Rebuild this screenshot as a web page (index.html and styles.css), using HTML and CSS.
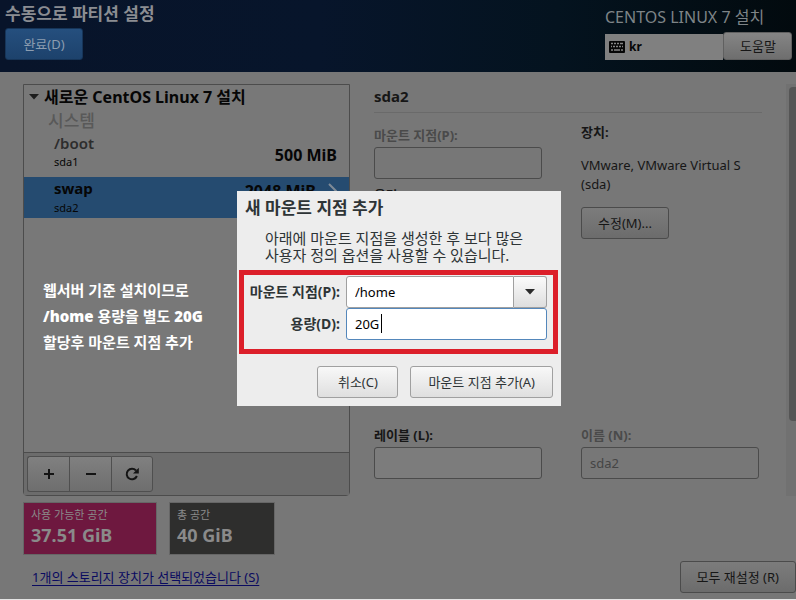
FILE: index.html
```html
<!DOCTYPE html>
<html lang="ko">
<head>
<meta charset="utf-8">
<meta name="viewport" content="width=device-width, initial-scale=1">
<title>수동으로 파티션 설정</title>
<link rel="stylesheet" href="styles.css">
</head>
<body>
<header class="topbar">
  <div class="topbar-left">
    <h1>수동으로 파티션 설정</h1>
    <button class="btn btn-done" type="button">완료(D)</button>
  </div>
  <div class="topbar-right">
    <p class="product">CENTOS LINUX 7 설치</p>
    <div class="topbar-tools">
      <div class="keyboard">
        <svg width="16" height="12" viewBox="0 0 16 12" aria-hidden="true">
          <rect width="16" height="12" rx="1" fill="#060606"/>
          <path d="M2 2.5h2M5 2.5h2M8 2.5h2M11 2.5h3M2 5.5h1M4 5.5h2M7 5.5h2M10 5.5h2M13 5.5h1M2 9h2M5 9h6M12 9h2" stroke="#858585" stroke-width="1.6"/>
        </svg>
        <span>kr</span>
      </div>
      <button class="btn btn-help" type="button">도움말</button>
    </div>
  </div>
</header>

<main class="content">
  <section class="partitions">
    <div class="list">
      <h2 class="tree-title">
        <svg width="10" height="6" viewBox="0 0 10 6" aria-hidden="true"><path d="M0 0h10L5 5.500z" fill="#1c1c1c"/></svg>
        새로운 CentOS Linux 7 설치
      </h2>
      <h3 class="group">시스템</h3>
      <div class="item">
        <div><div class="mount">/boot</div><div class="device">sda1</div></div>
        <div class="size">500 MiB</div>
      </div>
      <div class="item selected">
        <div><div class="mount">swap</div><div class="device">sda2</div></div>
        <div class="size">2048 MiB
          <svg width="9" height="16" viewBox="0 0 9 16" aria-hidden="true"><path d="M1 1l7 7-7 7" fill="none" stroke="#7f8a96" stroke-width="2"/></svg>
        </div>
      </div>
      <p class="note">웹서버 기준 설치이므로<br><b>/home</b> 용량을 별도 <b>20G</b><br>할당후 마운트 지점 추가</p>
    </div>
    <div class="toolbar">
      <div class="tool-group">
        <button type="button" aria-label="추가"><svg width="12" height="12" viewBox="0 0 12 12"><path d="M6 1v10M1 6h10" stroke="#141414" stroke-width="2"/></svg></button>
        <button type="button" aria-label="제거"><svg width="12" height="12" viewBox="0 0 12 12"><path d="M1 6h10" stroke="#141414" stroke-width="2"/></svg></button>
        <button type="button" aria-label="다시 읽기"><svg width="14" height="14" viewBox="0 0 14 14"><path d="M11 3.500A5.300 5.300 0 1 0 11.900 9" fill="none" stroke="#141414" stroke-width="2"/><path d="M13.800 .8v5.800H8z" fill="#141414"/></svg></button>
      </div>
    </div>
  </section>

  <section class="details">
    <h2>sda2</h2>
    <div class="detail-grid">
      <div class="field">
        <label class="muted" for="mp">마운트 지점(P):</label>
        <input id="mp" type="text" disabled>
        <label class="capacity" for="cap">용량(D):</label>
        <input id="cap" type="text">
      </div>
      <div class="device-info">
        <h3>장치:</h3>
        <p>VMware, VMware Virtual S (sda)</p>
        <button class="btn btn-modify" type="button">수정(M)...</button>
      </div>
      <div class="field">
        <label for="lb">레이블 (L):</label>
        <input id="lb" type="text">
      </div>
      <div class="field">
        <label class="muted" for="nm">이름 (N):</label>
        <input id="nm" type="text" value="sda2" disabled>
      </div>
    </div>
  </section>
  <div class="scrollbar"><div class="thumb"></div></div>
</main>

<footer class="footer">
  <div>
    <div class="spaces">
      <div class="space available"><span>사용 가능한 공간</span><strong>37.51 GiB</strong></div>
      <div class="space total"><span>총 공간</span><strong>40 GiB</strong></div>
    </div>
    <a href="#storage">1개의 스토리지 장치가 선택되었습니다 (S)</a>
  </div>
  <button class="btn btn-reset" type="button">모두 재설정 (R)</button>
</footer>

<div class="overlay">
  <form class="dialog" role="dialog" aria-labelledby="dlg-title">
    <h2 id="dlg-title">새 마운트 지점 추가</h2>
    <p>아래에 마운트 지점을 생성한 후 보다 많은<br>사용자 정의 옵션을 사용할 수 있습니다.</p>
    <div class="form-box">
      <label for="new-mp">마운트 지점(P):</label>
      <div class="combo">
        <input id="new-mp" type="text" value="/home">
        <button type="button" aria-label="목록 열기"><svg width="10" height="6" viewBox="0 0 10 6"><path d="M0 0h10L5 5.500z" fill="#2b2b2b"/></svg></button>
      </div>
      <label for="new-cap">용량(D):</label>
      <div class="focused">
        <input id="new-cap" type="text" value="20G">
        <span class="caret"></span>
      </div>
    </div>
    <div class="actions">
      <button class="btn" type="button">취소(C)</button>
      <button class="btn" type="button">마운트 지점 추가(A)</button>
    </div>
  </form>
</div>
</body>
</html>
```
FILE: styles.css
```css
* { box-sizing: border-box; }

body {
  margin: 0;
  min-height: 100vh;
  display: flex;
  flex-direction: column;
  position: relative;
  overflow: hidden;
  background: #777;
  border-bottom: 1px solid #e4e4e4;
  color: #161616;
  font: 13px/18px "Noto Sans", "Noto Sans CJK KR", sans-serif;
}

h1, h2, h3, p { margin: 0; }
button, input { font: inherit; color: inherit; margin: 0; }
svg { display: block; flex: none; }

.btn {
  height: 32px;
  padding: 0 16px;
  border: 1px solid #4b4b4b;
  border-radius: 3px;
  background: linear-gradient(#7c7c7c, #6c6c6c);
  white-space: nowrap;
}

/* Top bar */
.topbar {
  display: flex;
  justify-content: space-between;
  height: 72px;
  padding: 2px 4px 0 5px;
  background: linear-gradient(90deg, #08142a, #07152b 40%, #04131f 70%, #020a0e);
}
.topbar h1 { font-size: 17px; line-height: 24px; color: #8b8d92; }
.btn-done {
  width: 78px;
  margin-top: 2px;
  border-color: #163559;
  background: linear-gradient(#254f7e, #1d426c);
  color: #8c9db0;
}
.topbar-right { display: flex; flex-direction: column; width: 187px; }
.product { font-size: 16px; line-height: 30px; color: #7e8487; }
.topbar-tools { display: flex; align-items: flex-end; }
.keyboard {
  flex: 1;
  display: flex;
  align-items: center;
  gap: 4px;
  height: 26px;
  padding: 0 4px;
  background: #808080;
  color: #060606;
  font-size: 12px;
  font-weight: 700;
}
.btn-help { width: 69px; height: 28px; border-color: #606060; background: linear-gradient(#858585, #6e6e6e); }

/* Main area */
.content { display: flex; padding: 12px 0 0 23px; }
.partitions {
  width: 327px;
  height: 412px;
  display: flex;
  flex-direction: column;
  border: 1px solid #4c4c4c;
  border-radius: 0 0 4px 4px;
}
.list { flex: 1; background: #787878; }
.tree-title {
  display: flex;
  align-items: center;
  gap: 5px;
  padding-left: 5px;
  font-size: 16px;
  line-height: 24px;
  color: #060606;
}
.group { padding-left: 24px; font-size: 17px; font-weight: 500; line-height: 24px; color: #595959; }
.item {
  display: flex;
  justify-content: space-between;
  align-items: center;
  padding: 0 12px 6px 30px;
  color: #060606;
}
.mount { font-size: 15px; font-weight: 600; line-height: 20px; color: #2d2d2d; }
.size { font-size: 16px; font-weight: 700; line-height: 20px; padding-bottom: 8px; margin-bottom: -14px; }
.device { font-size: 11px; line-height: 18px; }
.item.selected { padding: 0 12px 1px 30px; background: #254b70; }
.selected .mount { color: #060606; font-weight: 700; line-height: 22px; }
.selected .size { display: flex; align-items: center; gap: 12px; margin: 0; padding-bottom: 12px; }
.note {
  padding: 59px 0 0 19px;
  color: #fff;
  font-size: 15px;
  line-height: 26px;
  font-weight: 600;
}
.toolbar { height: 43px; padding: 3px; border-top: 1px solid #4c4c4c; background: #6c6c6c; }
.tool-group { display: inline-flex; }
.tool-group button {
  display: flex;
  align-items: center;
  justify-content: center;
  width: 42px;
  height: 36px;
  padding: 0;
  border: 1px solid #4f4f4f;
  border-right-width: 0;
  background: linear-gradient(#808080, #6e6e6e);
}
.tool-group button:first-child { border-radius: 3px 0 0 3px; }
.tool-group button:last-child { border-right-width: 1px; border-radius: 0 3px 3px 0; }

.details { flex: 1; padding: 0 24px; }
.details h2 { font-size: 15px; line-height: 24px; padding-bottom: 4px; border-bottom: 1px solid #6a6a6a; }
.detail-grid { display: grid; grid-template-columns: 168px 178px; grid-template-rows: 300px auto; column-gap: 39px; padding-top: 10px; }
.field { display: flex; flex-direction: column; }
.field label { font-size: 13px; font-weight: 700; line-height: 24px; }
.field input {
  width: 100%;
  height: 32px;
  padding: 0 8px;
  border: 1px solid #4b4b4b;
  border-radius: 3px;
  background: #7c7c7c;
}
.field input:disabled { background: #777; color: #454545; }
.field .muted { color: #4a4a4a; }
.field .capacity { padding-top: 4px; }
.device-info h3 { font-size: 13px; line-height: 18px; }
.device-info p { padding: 15px 0 13px; line-height: 19px; }
.scrollbar { width: 10px; padding: 3px 0 0 3px; background: #717171; }
.thumb { height: 334px; border-radius: 4px 0 0 4px; background: #555; }

/* Footer */
.footer { display: flex; justify-content: space-between; align-items: flex-start; padding: 6px 0 0 23px; }
.spaces { display: flex; gap: 12px; }
.space { min-width: 106px; height: 53px; padding: 4px 7px; border: 1px solid #666; color: #8a8a8a; }
.space span { display: block; font-size: 11px; line-height: 16px; }
.space strong { display: block; font-size: 18px; line-height: 24px; }
.available { width: 134px; background: #6e183f; }
.total { background: #2e2e2d; }
.footer a { display: inline-block; margin: 13px 0 0 9px; color: #0a0a60; text-underline-offset: 3px; }
.btn-reset { margin-top: 59px; }

/* Dialog */
.overlay { position: absolute; inset: 0; display: flex; align-items: center; justify-content: center; padding: 0 0 2px 2px; }
.dialog { width: 324px; padding: 2px 3px 8px 2px; background: #ededed; color: #2e3436; }
.dialog h2 { padding-left: 6px; font-size: 17px; line-height: 30px; }
.dialog p { padding: 7px 0 6px 26px; font-size: 15px; line-height: 17px; }
.form-box {
  display: grid;
  grid-template-columns: 1fr 201px;
  column-gap: 6px;
  align-items: center;
  padding: 1px 6px 9px 0;
  border: 5px solid #dc1f2a;
}
.form-box label { text-align: right; font-size: 14px; font-weight: 700; white-space: nowrap; }
.form-box input {
  width: 100%;
  height: 32px;
  padding: 0 8px;
  border: 1px solid #a0a0a0;
  border-radius: 3px;
  background: #fff;
  color: #000;
  outline: 0;
}
.combo { display: flex; }
.form-box .combo input { border-radius: 3px 0 0 3px; }
.combo button {
  display: flex;
  align-items: center;
  justify-content: center;
  flex: 0 0 33px;
  border: 1px solid #a0a0a0;
  border-left: 0;
  border-radius: 0 3px 3px 0;
  background: linear-gradient(#fbfbfb, #dedede);
}
.focused { position: relative; }
.form-box .focused input { border-color: #5487bb; }
.caret { position: absolute; left: 35px; top: 6px; width: 1px; height: 19px; background: #000; }
.actions { display: flex; justify-content: flex-end; gap: 12px; padding: 12px 5px 0 0; }
.actions .btn { min-width: 81px; padding: 0 17px; border-color: #a0a0a0; background: linear-gradient(#f8f8f8, #dfdfdf); }
```
